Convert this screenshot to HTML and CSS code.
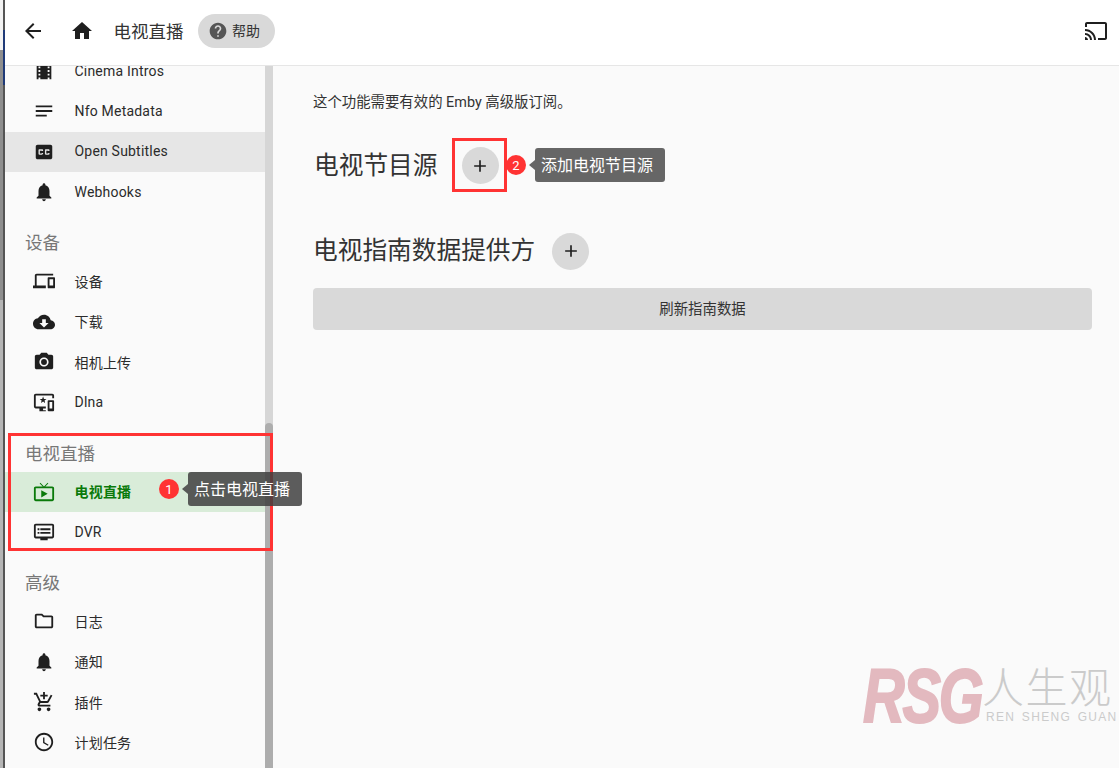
FILE: index.html
```html
<!DOCTYPE html>
<html lang="zh">
<head>
<meta charset="utf-8">
<title>电视直播</title>
<link rel="stylesheet" href="styles.css">
</head>
<body>
<div class="edge"></div>
<div class="app">
  <header class="topbar">
    <svg class="tb-back" viewBox="0 0 24 24"><path d="M20 11H7.83l5.59-5.59L12 4l-8 8 8 8 1.41-1.41L7.83 13H20z"/></svg>
    <svg class="tb-home" viewBox="0 0 24 24"><path d="M10 20v-6h4v6h5v-8h3L12 3 2 12h3v8z"/></svg>
    <span class="tb-title">电视直播</span>
    <span class="help">
      <svg viewBox="0 0 24 24"><path d="M12 2C6.48 2 2 6.48 2 12s4.48 10 10 10 10-4.48 10-10S17.52 2 12 2zm1 17h-2v-2h2v2zm2.07-7.75-.9.92C13.45 12.9 13 13.5 13 15h-2v-.5c0-1.1.45-2.1 1.17-2.83l1.24-1.26c.37-.36.59-.86.59-1.41 0-1.1-.9-2-2-2s-2 .9-2 2H8c0-2.21 1.79-4 4-4s4 1.79 4 4c0 .88-.36 1.68-.93 2.25z"/></svg>
      <span class="help-text">帮助</span>
    </span>
    <svg class="tb-cast" viewBox="0 0 24 24"><path d="M21 3H3c-1.1 0-2 .9-2 2v3h2V5h18v14h-7v2h7c1.1 0 2-.9 2-2V5c0-1.1-.9-2-2-2zM1 18v3h3c0-1.66-1.34-3-3-3zm0-4v2c2.76 0 5 2.24 5 5h2c0-3.87-3.13-7-7-7zm0-4v2c4.97 0 9 4.03 9 9h2c0-6.08-4.93-11-11-11z"/></svg>
  </header>
  <div class="body">
    <aside class="side">
      <nav class="nav">
        <a class="item"><svg viewBox="0 0 24 24"><path d="M18 3v2h-2V3H8v2H6V3H4v18h2v-2h2v2h8v-2h2v2h2V3h-2zM8 17H6v-2h2v2zm0-4H6v-2h2v2zm0-4H6V7h2v2zm10 8h-2v-2h2v2zm0-4h-2v-2h2v2zm0-4h-2V7h2v2z"/></svg><span>Cinema Intros</span></a>
        <a class="item"><svg viewBox="0 0 24 24"><path d="M3 18h12v-2H3v2zM3 6v2h18V6H3zm0 7h18v-2H3v2z"/></svg><span>Nfo Metadata</span></a>
        <a class="item hover"><svg viewBox="0 0 24 24"><path d="M19 4H5c-1.11 0-2 .9-2 2v12c0 1.1.89 2 2 2h14c1.1 0 2-.9 2-2V6c0-1.1-.9-2-2-2zm-8 7H9.5v-.5h-2v3h2V13H11v1c0 .55-.45 1-1 1H7c-.55 0-1-.45-1-1v-4c0-.55.45-1 1-1h3c.55 0 1 .45 1 1v1zm7 0h-1.5v-.5h-2v3h2V13H18v1c0 .55-.45 1-1 1h-3c-.55 0-1-.45-1-1v-4c0-.55.45-1 1-1h3c.55 0 1 .45 1 1v1z"/></svg><span>Open Subtitles</span></a>
        <a class="item"><svg viewBox="0 0 24 24"><path d="M12 22c1.1 0 2-.9 2-2h-4c0 1.1.89 2 2 2zm6-6v-5c0-3.07-1.64-5.64-4.5-6.32V4c0-.83-.67-1.5-1.5-1.5s-1.5.67-1.5 1.5v.68C7.63 5.36 6 7.92 6 11v5l-2 2v1h16v-1l-2-2z"/></svg><span>Webhooks</span></a>

        <h3 class="group">设备</h3>
        <a class="item"><svg viewBox="0 0 24 24"><path d="M4 6h18V4H4c-1.1 0-2 .9-2 2v11H0v3h14v-3H4V6zm19 2h-6c-.55 0-1 .45-1 1v10c0 .55.45 1 1 1h6c.55 0 1-.45 1-1V9c0-.55-.45-1-1-1zm-1 9h-4v-7h4v7z"/></svg><span>设备</span></a>
        <a class="item"><svg viewBox="0 0 24 24"><path d="M19.35 10.04C18.67 6.59 15.64 4 12 4 9.11 4 6.6 5.64 5.35 8.04 2.34 8.36 0 10.91 0 14c0 3.31 2.69 6 6 6h13c2.76 0 5-2.24 5-5 0-2.64-2.05-4.78-4.65-4.96zM17 13l-5 5-5-5h3V9h4v4h3z"/></svg><span>下载</span></a>
        <a class="item"><svg viewBox="0 0 24 24"><circle cx="12" cy="12" r="3.2"/><path d="M9 2 7.17 4H4c-1.1 0-2 .9-2 2v12c0 1.1.9 2 2 2h16c1.1 0 2-.9 2-2V6c0-1.1-.9-2-2-2h-3.17L15 2H9zm3 15c-2.76 0-5-2.24-5-5s2.24-5 5-5 5 2.24 5 5-2.24 5-5 5z"/></svg><span>相机上传</span></a>
        <a class="item"><svg viewBox="0 0 24 24"><path d="M3 3h18c1.1 0 2 .9 2 2v3h-2V5H3v12h11v2h-3v2h3v1H7v-3H3c-1.1 0-2-.9-2-2V5c0-1.1.9-2 2-2zm8 3 1 2.6 2.7.1-2.1 1.7.7 2.6-2.3-1.5-2.3 1.5.7-2.6-2.1-1.7 2.7-.1L11 6zm6 4h5c.6 0 1 .4 1 1v10c0 .6-.4 1-1 1h-5c-.6 0-1-.4-1-1V11c0-.6.4-1 1-1zm1 2v7h3v-7h-3z"/></svg><span>Dlna</span></a>

        <h3 class="group">电视直播</h3>
        <a class="item active"><svg viewBox="0 0 24 24"><path d="M21 6h-7.59l3.29-3.29L16 2l-4 4-4-4-.71.71L10.59 6H3c-1.1 0-2 .89-2 2v12c0 1.1.9 2 2 2h18c1.1 0 2-.9 2-2V8c0-1.110-.9-2-2-2zm0 14H3V8h18v12zM9 10v8l7-4z"/></svg><span>电视直播</span></a>
        <a class="item"><svg viewBox="0 0 24 24"><path d="M21 3H3c-1.1 0-2 .9-2 2v12c0 1.1.9 2 2 2h5v2h8v-2h5c1.1 0 1.99-.9 1.99-2L23 5c0-1.1-.9-2-2-2zm0 14H3V5h18v12zm-2-9H8v2h11V8zm0 4H8v2h11v-2zM7 8H5v2h2V8zm0 4H5v2h2v-2z"/></svg><span>DVR</span></a>

        <h3 class="group">高级</h3>
        <a class="item"><svg viewBox="0 0 24 24"><path d="M9.17 6l2 2H20v10H4V6h5.17M10 4H4c-1.1 0-1.99.9-1.99 2L2 18c0 1.1.9 2 2 2h16c1.1 0 2-.9 2-2V8c0-1.1-.9-2-2-2h-8l-2-2z"/></svg><span>日志</span></a>
        <a class="item"><svg viewBox="0 0 24 24"><path d="M12 22c1.1 0 2-.9 2-2h-4c0 1.1.89 2 2 2zm6-6v-5c0-3.07-1.64-5.64-4.5-6.32V4c0-.83-.67-1.5-1.5-1.5s-1.5.67-1.5 1.5v.68C7.63 5.36 6 7.92 6 11v5l-2 2v1h16v-1l-2-2z"/></svg><span>通知</span></a>
        <a class="item"><svg viewBox="0 0 24 24"><path d="M11 9h2V6h3V4h-3V1h-2v3H8v2h3v3zm-4 9c-1.1 0-1.99.9-1.99 2S5.900 22 7 22s2-.9 2-2-.9-2-2-2zm10 0c-1.100 0-1.990.9-1.990 2s.89 2 1.990 2 2-.9 2-2-.9-2-2-2zm-9.830-3.250.03-.12.9-1.630h7.450c.75 0 1.410-.41 1.750-1.030l3.860-7.010L19.420 4h-.01l-1.100 2-2.760 5H8.530l-.13-.27L6.160 6l-.95-2-.94-2H1v2h2l3.600 7.590-1.350 2.450c-.16.280-.25.610-.25.960 0 1.100.9 2 2 2h12v-2H7.420c-.13 0-.25-.11-.25-.25z"/></svg><span>插件</span></a>
        <a class="item"><svg viewBox="0 0 24 24"><path d="M11.99 2C6.470 2 2 6.480 2 12s4.470 10 9.990 10C17.520 22 22 17.520 22 12S17.520 2 11.990 2zM12 20c-4.420 0-8-3.580-8-8s3.580-8 8-8 8 3.580 8 8-3.580 8-8 8zm.5-13H11v6l5.250 3.150.75-1.230-4.500-2.670z"/></svg><span>计划任务</span></a>
      </nav>
      <div class="redbox redbox-nav"></div>
      <div class="hint hint-nav"><span class="badge">1</span><span class="tip">点击电视直播</span></div>
    </aside>
    <div class="scrollbar"><div class="thumb"></div></div>
    <main class="main">
      <p class="notice">这个功能需要有效的 Emby 高级版订阅。</p>
      <div class="sec sec-1">
        <h2>电视节目源</h2>
        <span class="addwrap">
          <button class="add"><svg viewBox="0 0 24 24"><path d="M19 13h-6v6h-2v-6H5v-2h6V5h2v6h6v2z"/></svg></button>
        </span>
        <span class="hint2"><span class="badge">2</span><span class="tip">添加电视节目源</span></span>
      </div>
      <div class="sec sec-2">
        <h2>电视指南数据提供方</h2>
        <button class="add"><svg viewBox="0 0 24 24"><path d="M19 13h-6v6h-2v-6H5v-2h6V5h2v6h6v2z"/></svg></button>
      </div>
      <div class="refresh">刷新指南数据</div>
      <div class="wm">
        <span class="wm-rsg">RSG</span>
        <span class="wm-right"><span class="wm-cn">人生观</span><span class="wm-en">REN SHENG GUAN</span></span>
      </div>
    </main>
  </div>
</div>
</body>
</html>
```
FILE: styles.css
```css
* { box-sizing: border-box; }
html, body { margin: 0; height: 100%; }
body {
  display: flex;
  height: 768px;
  overflow: hidden;
  background: #fafafa;
  font-family: Roboto, "Noto Sans CJK SC", sans-serif;
  color: #1f1f1f;
}
.edge {
  width: 5px;
  flex: none;
  background:
    linear-gradient(#f2f2f2 50px, #8e8e8e 50px, #8e8e8e 300px, #b5b5b5 300px) 0 0 / 3px 100% no-repeat,
    linear-gradient(#1f3a78, #1f3a78) 3px 30px / 2px 55px no-repeat,
    #555;
}
.app { flex: 1; min-width: 0; display: flex; flex-direction: column; }
.topbar {
  height: 66px;
  flex: none;
  display: flex;
  align-items: center;
  background: #fff;
  border-bottom: 1px solid #e6e6e6;
  padding: 0 11px 3px 0;
  position: relative;
  z-index: 1;
}
.topbar svg { fill: #1f1f1f; flex: none; }
.tb-back { width: 24px; height: 24px; margin-left: 16px; }
.tb-home { width: 24px; height: 24px; margin-left: 25px; }
.tb-title { font-size: 17.5px; margin-left: 19.5px; padding-bottom: 2px; color: #333; }
.help {
  display: flex; align-items: center; gap: 4px;
  margin-left: 14.5px; height: 34px; padding: 0 15px 0 10px;
  border-radius: 17px; background: #d9d9d9;
  font-size: 14px; color: #333;
}
.help-text { padding-bottom: 2px; }
.topbar .help svg { width: 20px; height: 20px; fill: #555; }
.tb-cast { width: 24px; height: 24px; margin-left: auto; }
.body { flex: 1; min-height: 0; display: flex; }
.side { width: 260px; flex: none; position: relative; overflow: visible; }
.nav { height: 100%; overflow: hidden; }
.item {
  display: flex; align-items: center;
  height: 40.33px; padding-left: 28px;
  font-size: 14px; color: #2b2b2b; letter-spacing: .2px;
}
.item:first-child { margin-top: -15px; }
.item svg { width: 22px; height: 22px; fill: #1f1f1f; flex: none; }
.item span { margin-left: 19.5px; padding-bottom: 1px; }
.item.hover { background: #e6e6e6; }
.item.active { background: #d9ecd9; color: #0a7a0a; font-weight: 700; }
.item.active svg { fill: #0a7a0a; }
.group { margin: 16px 0 3px; height: 30px; line-height: 30px; padding-left: 20px; font-size: 17.5px; font-weight: 400; color: #777; }
.scrollbar { width: 8px; flex: none; background: #d6d6d6; position: relative; }
.thumb { position: absolute; top: 357px; left: 0; right: 0; bottom: 0; background: #adadad; border-radius: 4px 4px 0 0; }
.main { flex: 1; min-width: 0; position: relative; padding: 29px 27px 0 40px; }
.notice { margin: 0; font-size: 14.4px; line-height: 16px; color: #333; }
.sec { display: flex; align-items: center; }
.sec h2 { margin: 0; font-size: 24.7px; font-weight: 400; color: #333; white-space: nowrap; }
.sec-1 { margin-top: 27px; height: 54px; padding-left: 1px; }
.sec-1 h2 { padding-bottom: 4px; width: 125px; }
.sec-2 { margin-top: 40px; height: 38px; }
.sec-2 h2 { padding-bottom: 6px; width: 225px; }
.addwrap { display: flex; align-items: center; justify-content: center; width: 55px; height: 54px; margin-left: 13px; padding: 1px 0 0 1px; border: 3px solid #f33; }
.sec-2 .add { margin-left: 14px; }
.add { width: 37px; height: 37px; flex: none; border: 0; padding: 0; border-radius: 50%; background: #d9d9d9; display: flex; align-items: center; justify-content: center; }
.add svg { width: 20px; height: 20px; fill: #1f1f1f; }
.refresh { margin-top: 18px; height: 42px; padding-bottom: 3px; border-radius: 4px; background: #d9d9d9; display: flex; align-items: center; justify-content: center; font-size: 14.4px; color: #333; }
.badge { position: relative; width: 20px; height: 20px; flex: none; border-radius: 50%; background: #f33; color: #fff; display: flex; align-items: center; justify-content: center; font-size: 13px; }
.tip { position: relative; height: 34px; line-height: 36px; padding: 0 12px 0 6px; border-radius: 3px; color: #fff; font-size: 16px; background: #666; white-space: nowrap; }
.tip::before { content: ""; position: absolute; left: -6px; top: 12px; border-style: solid; border-width: 5px 6px 5px 0; border-color: transparent #666 transparent transparent; }
.hint { position: absolute; left: 154px; top: 406px; display: flex; align-items: center; gap: 9px; z-index: 3; }
.hint .tip { background: rgba(64,64,64,.85); }
.hint .tip::before { border-right-color: rgba(64,64,64,.85); }
.hint2 { display: flex; align-items: center; gap: 9px; margin-left: -1px; position: relative; }
.redbox { position: absolute; border: 3px solid #f33; pointer-events: none; z-index: 2; }
.redbox-nav { left: 3px; top: 367px; width: 265px; height: 118px; }
.wm { position: absolute; right: 3px; bottom: 44px; display: flex; align-items: center; gap: 5px; }
.wm-rsg { display: block; width: 118px; font-family: "Liberation Sans", sans-serif; font-size: 76px; font-weight: 700; font-style: italic; color: #e3b9bf; letter-spacing: -3px; line-height: 56px; white-space: nowrap; transform: scaleX(.76); transform-origin: left center; -webkit-text-stroke: 2px #e3b9bf; }
.wm-right { display: flex; flex-direction: column; width: 130px; color: #cbcbcb; }
.wm-cn { font-size: 42px; line-height: 43px; font-weight: 300; letter-spacing: 1.5px; margin-left: -4px; white-space: nowrap; }
.wm-en { font-family: "Liberation Sans", sans-serif; font-size: 12px; line-height: 14px; letter-spacing: 1.3px; word-spacing: 2px; white-space: nowrap; }
```
